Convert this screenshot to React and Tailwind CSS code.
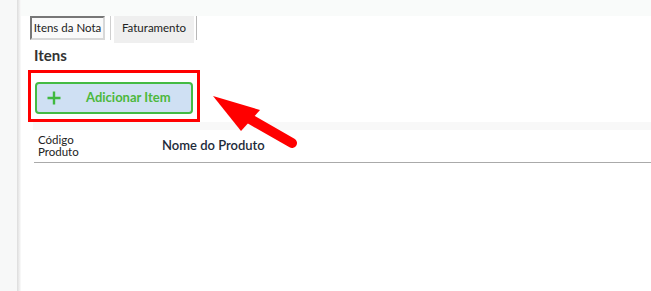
import React from 'react';

function PlusIcon() {
  return (
    <svg width="14" height="14" viewBox="0 0 14 14" className="shrink-0">
      <path d="M7 0.5v13M0.5 7h13" stroke="#3fb93f" strokeWidth="2.4" />
    </svg>
  );
}

function Arrow() {
  return (
    <svg
      className="pointer-events-none absolute left-0 top-0"
      width="651"
      height="291"
      viewBox="0 0 651 291"
    >
      <line x1="250" y1="119" x2="292" y2="143" stroke="#ff0000" strokeWidth="10" strokeLinecap="round" />
      <polygon points="213,96 260,110 241,131" fill="#ff0000" />
    </svg>
  );
}

export default function App() {
  return (
    <div className="relative flex h-[291px] w-[651px] overflow-hidden bg-white font-['Lato','Liberation_Sans',sans-serif] text-[#222]">
      {/* barra lateral */}
      <div className="w-[17px] shrink-0 bg-[#f7f8f8]" />
      <div className="w-[4px] shrink-0 bg-gradient-to-r from-[#dcdcdc] to-[#fbfbfb]" />

      <div className="flex min-w-0 flex-1 flex-col">
        <div className="h-[16px] bg-[#f9fbfa]" />

        {/* abas */}
        <div className="flex h-[27px] items-start pl-[9px]">
          <div className="flex h-[24px] w-[75px] items-center justify-center border-2 border-t-[#777] border-l-[#777] border-r-[#d8d8d8] border-b-[#d8d8d8] bg-[#fafafa] text-[11.5px]">
            Itens da Nota
          </div>
          <div className="ml-[5px] h-[24px] w-px bg-[#cfcfcf]" />
          <div className="ml-[3px] flex h-[27px] w-[80px] items-center justify-center bg-[#efefef] pb-[3px] text-[11.5px]">
            Faturamento
          </div>
          <div className="ml-[2px] h-[24px] w-px bg-[#b8b8b8]" />
        </div>

        <h2 className="mt-[3px] h-[18px] pl-[13px] text-[15px] font-bold leading-[18px] text-[#333]">
          Itens
        </h2>

        <div className="mt-[18px] pl-[14px]">
          <button
            type="button"
            className="flex h-[32px] w-[158px] items-center rounded-[4px] border-2 border-[#44bb44] bg-[#cfe0f3] pl-[10px] text-[13px] font-bold text-[#4cb83c]"
          >
            <PlusIcon />
            <span className="ml-[25px]">Adicionar Item</span>
          </button>
        </div>

        <div className="mt-[8px] ml-[12px] h-[8px] bg-[#f8f8f8]" />

        {/* cabeçalho da tabela */}
        <div className="ml-[13px] flex h-[33px] items-center border-b border-[#aaaaaa]">
          <div className="w-[128px] pl-[4px] text-[11.5px] leading-[12px]">
            Código
            <br />
            Produto
          </div>
          <div className="text-[13px] font-semibold text-[#1d2b3a]">Nome do Produto</div>
        </div>
      </div>

      {/* destaque do tutorial */}
      <div className="pointer-events-none absolute left-[28px] top-[70px] h-[52px] w-[172px] border-[3px] border-[#ff0000]" />
      <Arrow />
    </div>
  );
}
